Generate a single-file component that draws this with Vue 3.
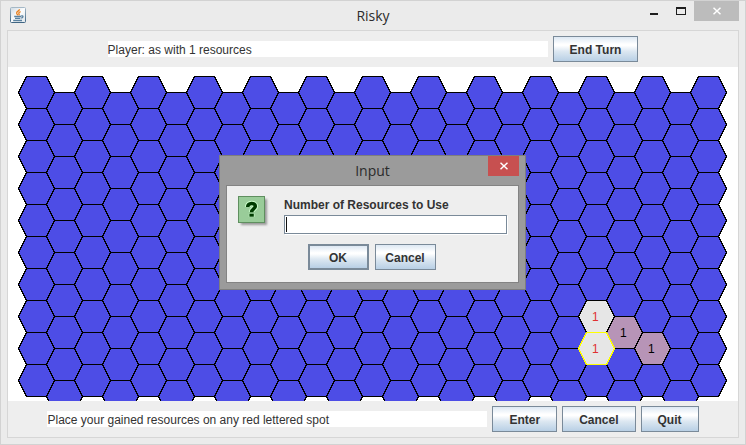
<script setup>
import { ref } from 'vue'

const COLUMNS = 25
const ROWS = 10
const PITCH_X = 28
const PITCH_Y = 32

const owned = {
  '20,7': { kind: 'open', count: 1 },
  '21,7': { kind: 'rival', count: 1 },
  '22,8': { kind: 'rival', count: 1 },
  '20,8': { kind: 'open', count: 1, selected: true }
}

const cells = []
for (let col = 0; col < COLUMNS; col++) {
  for (let row = 0; row < ROWS; row++) {
    const x = 10 + col * PITCH_X
    const y = 9 + row * PITCH_Y + (col % 2) * 16
    cells.push({
      key: `${col},${row}`,
      x,
      y,
      points: `${x + 8},${y} ${x + 28},${y} ${x + 36},${y + 16} ${x + 28},${y + 32} ${x + 8},${y + 32} ${x},${y + 16}`,
      ...(owned[`${col},${row}`] || { kind: 'sea' })
    })
  }
}
// The selected cell is drawn last so that its outline stays on top.
cells.sort((a, b) => Number(!!a.selected) - Number(!!b.selected))

const amount = ref('')
const status = ref('Player: as with 1 resources')
const hint = ref('Place your gained resources on any red lettered spot')
</script>

<template>
  <div class="window">
    <header class="titlebar">
      <svg class="app-icon" width="16" height="16" viewBox="0 0 16 16" aria-hidden="true">
        <defs>
          <linearGradient id="java-frame" x1="0" y1="0" x2="0" y2="1">
            <stop offset="0" stop-color="#a5b8c6" />
            <stop offset="1" stop-color="#3f6583" />
          </linearGradient>
          <linearGradient id="java-face" x1="0" y1="0" x2="1" y2="1">
            <stop offset="0" stop-color="#cfdae2" />
            <stop offset="0.5" stop-color="#fbfcfd" />
            <stop offset="1" stop-color="#dde5ea" />
          </linearGradient>
        </defs>
        <rect x="0.5" y="0.5" width="15" height="15" rx="1" fill="url(#java-face)" stroke="url(#java-frame)" />
        <path d="M9.5 2.2C9.5 4 6.3 4.3 6.6 6.2C6.8 7 7.6 7.5 7.8 8.3M10.6 4.6C8.6 5.3 8.4 6.3 9.2 7.2C9.4 7.6 9 8 8.7 8.4" fill="none" stroke="#e8801f" stroke-width="1.3" />
        <path d="M4.2 9.5H11M5 11.3H10.3M3.2 13.5H12M11 9C13.6 8.1 13.6 10.6 11.2 11.2" fill="none" stroke="#5b82a0" stroke-width="1.3" />
      </svg>
      <h1 class="title">Risky</h1>
      <div class="controls">
        <button class="control minimize" type="button" aria-label="Minimize">
          <svg width="10" height="10" viewBox="0 0 10 10"><path d="M1 7h8v2h-8z" fill="#1e1e1e" /></svg>
        </button>
        <button class="control maximize" type="button" aria-label="Maximize">
          <svg width="10" height="10" viewBox="0 0 10 10"><path d="M0 1h10v8h-10zM1 3v5h8v-5z" fill="#1e1e1e" fill-rule="evenodd" /></svg>
        </button>
        <button class="control close" type="button" aria-label="Close">
          <svg width="8" height="8" viewBox="0 0 8 8"><path d="M0.5 0.8L7.5 7.2M7.5 0.8L0.5 7.2" stroke="#fff" stroke-width="1.5" /></svg>
        </button>
      </div>
    </header>

    <main class="client">
      <div class="bar">
        <input v-model="status" class="message" type="text" readonly aria-label="Player status" />
        <button class="button" type="button">End Turn</button>
      </div>

      <div class="board">
        <svg class="grid" role="img" aria-label="Game board">
          <g transform="translate(0.5 0.5)">
            <polygon
              v-for="cell in cells"
              :key="cell.key"
              :points="cell.points"
              class="hex"
              :class="[cell.kind, { selected: cell.selected }]"
            />
          </g>
          <template v-for="cell in cells" :key="cell.key">
            <text v-if="cell.count" class="count" :class="cell.kind" :x="cell.x + 14" :y="cell.y + 21">{{ cell.count }}</text>
          </template>
        </svg>
      </div>

      <div class="bar">
        <input v-model="hint" class="message" type="text" readonly aria-label="Instruction" />
        <button class="button" type="button">Enter</button>
        <button class="button" type="button">Cancel</button>
        <button class="button" type="button">Quit</button>
      </div>
    </main>

    <section class="dialog" role="dialog" aria-labelledby="dialog-title">
      <header class="dialog-bar">
        <h2 id="dialog-title" class="title">Input</h2>
        <button class="dialog-close" type="button" aria-label="Close dialog">
          <svg width="8" height="8" viewBox="0 0 8 8"><path d="M0.5 0.8L7.5 7.2M7.5 0.8L0.5 7.2" stroke="#fff" stroke-width="1.5" /></svg>
        </button>
      </header>
      <form class="dialog-body" @submit.prevent>
        <div class="prompt">
          <svg class="question" width="32" height="32" viewBox="0 0 32 32" aria-hidden="true">
            <defs>
              <filter id="soft" x="-20%" y="-20%" width="140%" height="140%">
                <feGaussianBlur stdDeviation="1.2" />
              </filter>
            </defs>
            <rect x="3" y="3" width="26" height="26" fill="#999" filter="url(#soft)" />
            <rect x="0.5" y="0.5" width="26" height="26" fill="#9c9" stroke="#5f8f5f" />
            <g fill="none" stroke-linejoin="round">
              <path d="M9.7 11C9.5 6.4 17.3 6.4 17.3 10.2C17.3 13 13.6 12.8 13.6 16M13.6 17.5V21" stroke="#cfc" stroke-width="5.6" />
              <path d="M9.7 11C9.5 6.4 17.3 6.4 17.3 10.2C17.3 13 13.6 12.8 13.6 16.2" stroke="#003c00" stroke-width="3.6" />
              <path d="M11.4 19.2H15.8" stroke="#003c00" stroke-width="3" />
            </g>
          </svg>
          <div class="field">
            <label for="amount">Number of Resources to Use</label>
            <div class="entry">
              <input id="amount" v-model="amount" type="text" />
              <span class="caret"></span>
            </div>
          </div>
        </div>
        <div class="actions">
          <button class="button default" type="submit">OK</button>
          <button class="button" type="button">Cancel</button>
        </div>
      </form>
    </section>
  </div>
</template>

<style>
body {
  margin: 0;
}
</style>

<style scoped>
* {
  box-sizing: border-box;
}

.window {
  position: relative;
  display: flex;
  flex-direction: column;
  min-height: 100vh;
  padding: 0 6px 6px;
  border: 1px solid #d2d2d2;
  background: #ebebeb;
  color: #333;
  font: 12px/16px "Liberation Sans", Arial, sans-serif;
}

.titlebar {
  display: grid;
  grid-template-columns: 1fr auto 1fr;
  align-items: start;
  height: 29px;
}

.app-icon {
  margin: 6px 0 0 3px;
}

.title {
  margin: 0;
  color: #2b2b2b;
  font: 400 14px/20px "Open Sans", "Noto Sans", sans-serif;
}

.titlebar .title {
  padding-top: 5px;
}

.controls {
  display: flex;
  justify-content: flex-end;
}

.control,
.dialog-close {
  display: flex;
  align-items: center;
  justify-content: center;
  height: 20px;
  padding: 0;
  border: 0;
  background: none;
}

.control {
  width: 27px;
}

.control.close {
  width: 45px;
  background: #bcbcbc;
}

.client {
  display: flex;
  flex: 1;
  flex-direction: column;
  border: 1px solid #d6d6d6;
  background: #eee;
}

.bar {
  display: flex;
  align-items: center;
  justify-content: center;
  gap: 5px;
  padding: 5px;
}

.message {
  flex: 0 1 440px;
  min-width: 0;
  height: 16px;
  padding: 2px 0 0;
  border: 0;
  background: #fff;
  color: #333;
  font: inherit;
  line-height: 14px;
  outline: 0;
}

.button {
  height: 26px;
  padding: 1px 16px 0;
  border: 1px solid #7a8a99;
  background: linear-gradient(#dde8f3 0%, #fff 30%, #fff 36%, #dce7f1 60%, #b8cfe5 100%);
  color: #333;
  font: bold 12px/16px "Liberation Sans", Arial, sans-serif;
  white-space: nowrap;
}

.board {
  flex: 1;
  min-height: 334px;
  background: #fff;
  display: flex;
}

.grid {
  flex: 1;
  min-width: 0;
  height: 334px;
}

.hex {
  stroke: #000;
  stroke-width: 1;
  shape-rendering: crispEdges;
}

.hex.sea {
  fill: #4d4de6;
}

.hex.open {
  fill: #e6e6e6;
}

.hex.rival {
  fill: #b794b7;
}

.hex.selected {
  stroke: #ff0;
}

.count {
  fill: #000;
  font-size: 12px;
}

.count.open {
  fill: #e03030;
}

.dialog {
  position: absolute;
  top: 154px;
  left: calc(50% - 154px);
  width: 307px;
  padding: 0 6px 6px;
  border: 1px solid #7e7e7e;
  background: #9b9b9b;
}

.dialog-bar {
  display: grid;
  grid-template-columns: 1fr auto 1fr;
  align-items: start;
  height: 29px;
}

.dialog-bar .title {
  grid-column: 2;
  padding-top: 5px;
}

.dialog-close {
  justify-self: end;
  width: 31px;
  background: #c75050;
}

.dialog-body {
  padding: 10px 11px 12px;
  border: 1px solid #838383;
  background: #eee;
}

.prompt {
  display: flex;
  gap: 14px;
}

.question {
  flex: none;
}

.field {
  flex: 1;
}

.field label {
  display: block;
  padding-top: 1px;
  font-weight: bold;
  line-height: 16px;
}

.entry {
  position: relative;
  margin-top: 2px;
}

.entry input {
  display: block;
  width: 100%;
  height: 19px;
  padding: 0 2px;
  border: 1px solid #7a8a99;
  background: #fff;
  box-shadow: 1px 1px #fff;
  font: inherit;
  outline: 0;
}

.caret {
  position: absolute;
  top: 2px;
  left: 2px;
  width: 1px;
  height: 15px;
  background: #111;
}

.actions {
  display: flex;
  justify-content: center;
  gap: 6px;
  padding: 10px 2px 0 0;
}

.actions .button {
  width: 61px;
  padding: 1px 0 0;
}

.button.default {
  border-width: 2px;
}
</style>
